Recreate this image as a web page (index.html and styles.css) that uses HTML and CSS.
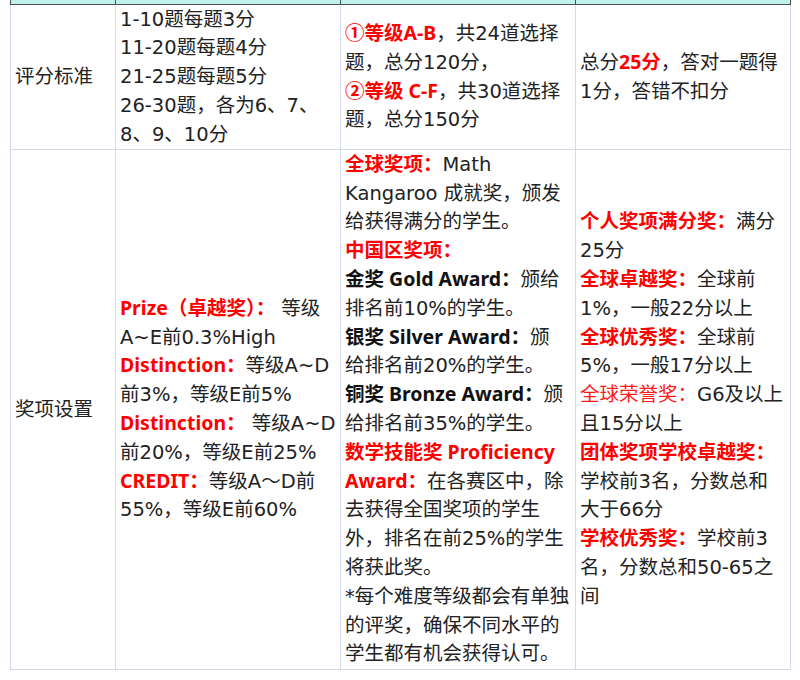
FILE: index.html
```html
<!DOCTYPE html>
<html lang="zh-CN">
<head>
<meta charset="utf-8">
<title>评分与奖项</title>
<link rel="stylesheet" href="styles.css">
</head>
<body>
<div class="grid">
  <div class="cell head first"></div>
  <div class="cell head"></div>
  <div class="cell head"></div>
  <div class="cell head"></div>

  <div class="cell first r1"><p>评分标准</p></div>
  <div class="cell r1"><p>1-10题每题3分<br>11-20题每题4分<br>21-25题每题5分<br>26-30题，各为6、7、<br>8、9、10分</p></div>
  <div class="cell r1"><p><span class="hl">①等级A-B</span>，共24道选择<br>题，总分120分，<br><span class="hl">②等级 C-F</span>，共30道选择<br>题，总分150分</p></div>
  <div class="cell r1"><p>总分<span class="hl">25分</span>，答对一题得<br>1分，答错不扣分</p></div>

  <div class="cell first r2"><p>奖项设置</p></div>
  <div class="cell r2"><p><span class="hl">Prize（卓越奖）：</span> 等级<br>A~E前0.3%High<br><span class="hl">Distinction：</span>等级A~D<br>前3%，等级E前5%<br><span class="hl">Distinction：</span> 等级A~D<br>前20%，等级E前25%<br><span class="hl">CREDIT：</span>等级A～D前<br>55%，等级E前60%</p></div>
  <div class="cell r2"><p><span class="hl">全球奖项：</span>Math<br>Kangaroo 成就奖，颁发<br>给获得满分的学生。<br><span class="hl">中国区奖项：</span><br><span class="bd">金奖 Gold Award：</span>颁给<br>排名前10%的学生。<br><span class="bd">银奖 Silver Award：</span>颁<br>给排名前20%的学生。<br><span class="bd">铜奖 Bronze Award：</span>颁<br>给排名前35%的学生。<br><span class="hl">数学技能奖 Proficiency</span><br><span class="hl">Award：</span>在各赛区中，除<br>去获得全国奖项的学生<br>外，排名在前25%的学生<br>将获此奖。<br>*每个难度等级都会有单独<br>的评奖，确保不同水平的<br>学生都有机会获得认可。</p></div>
  <div class="cell r2"><p><span class="hl">个人奖项满分奖：</span>满分<br>25分<br><span class="hl">全球卓越奖：</span>全球前<br>1%，一般22分以上<br><span class="hl">全球优秀奖：</span>全球前<br>5%，一般17分以上<br><span class="rd">全球荣誉奖：</span>G6及以上<br>且15分以上<br><span class="hl">团体奖项学校卓越奖：</span><br>学校前3名，分数总和<br>大于66分<br><span class="hl">学校优秀奖：</span>学校前3<br>名，分数总和50-65之<br>间</p></div>
</div>
</body>
</html>
```
FILE: styles.css
```css
html, body {
  margin: 0;
  padding: 0;
  background: #ffffff;
}
body {
  font-family: "DejaVu Sans", "Noto Sans CJK SC", sans-serif;
  font-size: 19.5px;
  line-height: 28.8px;
  color: #222222;
}
.grid {
  margin-left: 10px;
  display: grid;
  grid-template-columns: 106px 225px 235px 215px;
  grid-template-rows: 5px 145px 520px;
  width: 781px;
}
.cell {
  box-sizing: border-box;
  border-right: 1px solid #d3d9e8;
  border-bottom: 1px solid #d3d9e8;
  padding: 1px 0 0 4px;
  display: flex;
  flex-direction: column;
  justify-content: center;
  white-space: nowrap;
}
.cell.first {
  border-left: 1px solid #d3d9e8;
}
.cell.head {
  padding: 0;
  background: #bff2ea;
  border-right-color: #4a4f55;
  border-bottom-color: #4a4f55;
}
.cell.head.first {
  border-left-color: #4a4f55;
}
.cell p {
  margin: 0;
}
.hl {
  font-family: "Noto Sans", "Noto Sans CJK SC", sans-serif;
  line-height: 1;
  color: #ff0000;
  font-weight: 700;
}
.rd {
  color: #ff1a1a;
}
.bd {
  font-family: "Noto Sans", "Noto Sans CJK SC", sans-serif;
  line-height: 1;
  font-weight: 700;
  color: #111111;
}
```
